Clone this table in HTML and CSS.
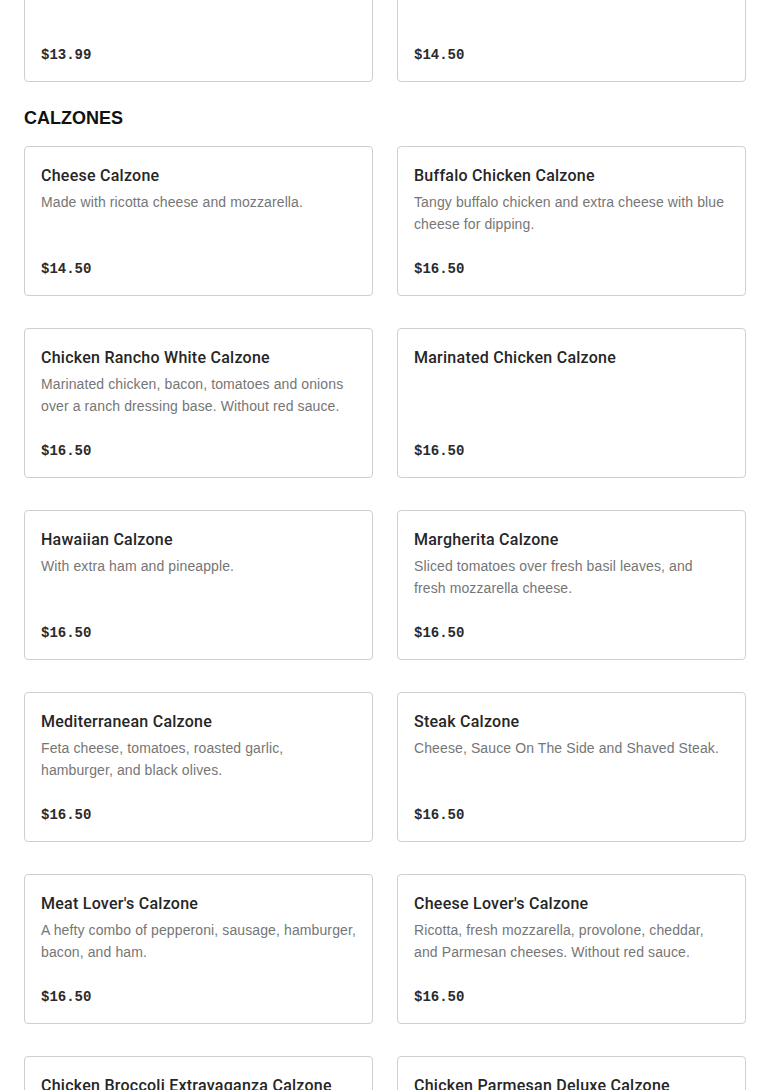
FILE: index.html
```html
<!DOCTYPE html>
<html>
<head>
<meta charset="utf-8">
<link rel="stylesheet" href="styles.css">
</head>
<body>
<main class="page">
  <div class="grid">
    <div class="card"><div class="price">$13.99</div></div>
    <div class="card"><div class="price">$14.50</div></div>
  </div>
  <h2 class="section-title">CALZONES</h2>
  <div class="grid">
    <div class="card"><h3 class="name">Cheese Calzone</h3><p class="desc">Made with ricotta cheese and mozzarella.</p><div class="price">$14.50</div></div>
    <div class="card"><h3 class="name">Buffalo Chicken Calzone</h3><p class="desc">Tangy buffalo chicken and extra cheese with blue cheese for dipping.</p><div class="price">$16.50</div></div>
    <div class="card"><h3 class="name">Chicken Rancho White Calzone</h3><p class="desc">Marinated chicken, bacon, tomatoes and onions over a ranch dressing base. Without red sauce.</p><div class="price">$16.50</div></div>
    <div class="card"><h3 class="name">Marinated Chicken Calzone</h3><div class="price">$16.50</div></div>
    <div class="card"><h3 class="name">Hawaiian Calzone</h3><p class="desc">With extra ham and pineapple.</p><div class="price">$16.50</div></div>
    <div class="card"><h3 class="name">Margherita Calzone</h3><p class="desc">Sliced tomatoes over fresh basil leaves, and fresh&nbsp;mozzarella cheese.</p><div class="price">$16.50</div></div>
    <div class="card"><h3 class="name">Mediterranean Calzone</h3><p class="desc">Feta cheese, tomatoes, roasted garlic, hamburger, and black olives.</p><div class="price">$16.50</div></div>
    <div class="card"><h3 class="name">Steak Calzone</h3><p class="desc">Cheese, Sauce On The Side and Shaved Steak.</p><div class="price">$16.50</div></div>
    <div class="card"><h3 class="name">Meat Lover's Calzone</h3><p class="desc">A hefty combo of pepperoni, sausage, hamburger, bacon, and ham.</p><div class="price">$16.50</div></div>
    <div class="card"><h3 class="name">Cheese Lover's Calzone</h3><p class="desc">Ricotta, fresh mozzarella, provolone, cheddar, and Parmesan cheeses. Without red sauce.</p><div class="price">$16.50</div></div>
    <div class="card"><h3 class="name">Chicken Broccoli Extravaganza Calzone</h3><p class="desc">Grilled chicken, broccoli and extra cheese.</p><div class="price">$16.50</div></div>
    <div class="card"><h3 class="name">Chicken Parmesan Deluxe Calzone</h3><p class="desc">Breaded chicken, marinara and mozzarella.</p><div class="price">$16.50</div></div>
  </div>
</main>
</body>
</html>
```
FILE: styles.css
```css
html, body {
  margin: 0;
  padding: 0;
  background: #fff;
}
body {
  font-family: "Liberation Sans", Arial, sans-serif;
  color: #2a2a2a;
  overflow: hidden;
}
.page {
  padding: 0 24px;
  margin-top: -68px;
}
.grid {
  display: grid;
  grid-template-columns: 1fr 1fr;
  column-gap: 24px;
  row-gap: 32px;
}
.card {
  box-sizing: border-box;
  min-height: 150px;
  border: 1px solid #cfcfcf;
  border-radius: 4px;
  padding: 17px 16px 16px;
  display: flex;
  flex-direction: column;
}
.name {
  margin: 0;
  font-family: Roboto, "Liberation Sans", sans-serif;
  font-size: 16px;
  line-height: 24px;
  font-weight: 500;
  letter-spacing: 0.25px;
  color: #262626;
}
.desc {
  margin: 3px 0 0;
  font-family: "Liberation Sans", Arial, sans-serif;
  font-size: 14px;
  line-height: 22px;
  letter-spacing: 0.11px;
  color: #767676;
}
.price {
  margin-top: auto;
  padding-top: 24px;
  font-family: "Liberation Mono", monospace;
  font-weight: 700;
  font-size: 14px;
  line-height: 20px;
  color: #2a2a2a;
}
.section-title {
  margin: 24px 0 16px;
  font-family: "Liberation Sans", Arial, sans-serif;
  font-weight: 900;
  font-size: 18px;
  line-height: 24px;
  color: #111;
}
```
